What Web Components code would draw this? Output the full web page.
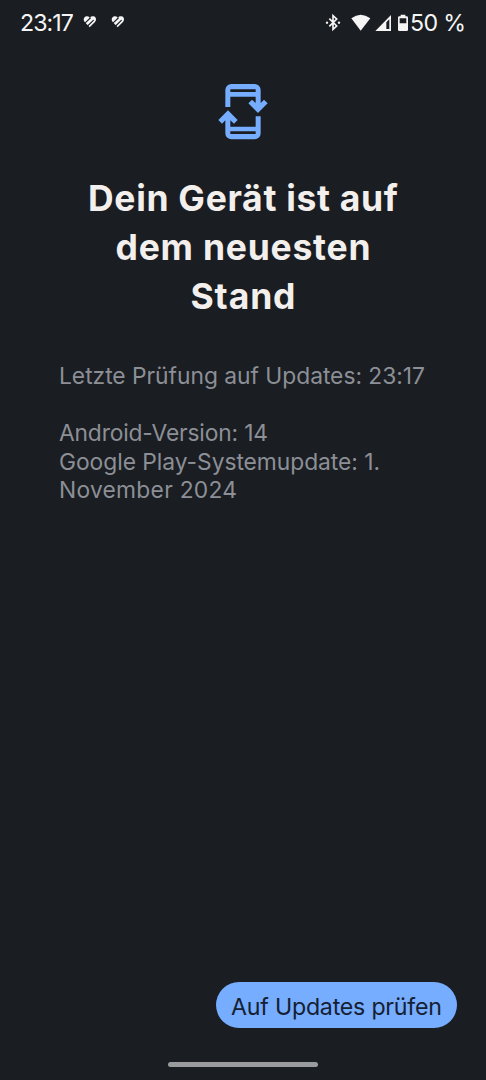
<!DOCTYPE html>
<html lang="de">
<head>
<meta charset="utf-8">
<title>Systemupdate</title>
<style>
html,body{margin:0;height:100%;background:#1a1d22;overflow:hidden}
body{font-family:Inter,"Open Sans",sans-serif}
</style>
</head>
<body>
<update-screen></update-screen>
<script>
const define = (name, html, setup) => customElements.define(name, class extends HTMLElement {
  connectedCallback() {
    if (this.shadowRoot) return;
    const t = document.createElement('template');
    t.innerHTML = html;
    this.attachShadow({mode: 'open'}).append(t.content.cloneNode(true));
    if (setup) setup(this);
  }
});

// A single line of text tracked to a given width.
define('tracked-text', `<style>:host{display:block;white-space:nowrap;width:max-content}span{display:inline-block}</style><span><slot></slot></span>`, el => {
  const s = el.shadowRoot.querySelector('span');
  const w = +el.getAttribute('width'), n = el.textContent.length;
  const gap = (w - s.getBoundingClientRect().width) / (n - 1);
  s.style.letterSpacing = gap + 'px';
  s.style.marginRight = -gap + 'px';
});

define('heart-icon', `<style>:host{display:block;width:14px;height:13px}svg{display:block}</style>
<svg width="14" height="13" viewBox="0 0 42 39"><path d="M20 37 5 21C-2 12 5 3 12 4Q17 4 20 8Q25 3 31 4C40 5 41 15 36 21Z" fill="#f5f5f5"/><path d="M5 25 22 9M14 33 31 16" fill="none" stroke="#1a1d22" stroke-width="3.4" stroke-linecap="round"/></svg>`);

define('status-bar', `<style>
:host{display:flex;height:46px;box-sizing:border-box;padding:0 20px 0 20px;align-items:center;color:#f5f5f5;font-size:23.2px;line-height:47px}
heart-icon{margin-left:9px;margin-top:-3px}heart-icon+heart-icon{margin-left:14px}
svg{display:block;margin-left:auto;margin-right:1px}
</style>
<tracked-text width="54">23:17</tracked-text><heart-icon></heart-icon><heart-icon></heart-icon>
<svg width="84" height="45" viewBox="45 0 252 135" fill="#f5f5f5">
<path d="M58 53 80 75 69 85V44L80 54 58 76" fill="none" stroke="#f5f5f5" stroke-width="5"/>
<circle cx="51" cy="65" r="3.5"/><circle cx="87" cy="65" r="3.5"/>
<path d="M124 52Q152 31 181 52L152 89Z"/>
<path fill-rule="evenodd" d="M196 90 243 42V90ZM229 64V84H238V55Z"/>
<path fill-rule="evenodd" d="M272 41H286V46H290Q294 46 294 50V86Q294 90 290 90H268Q264 90 264 86V50Q264 46 268 46H272ZM269 52V67H289V52Z"/>
</svg><tracked-text width="56">50 %</tracked-text>`);

define('update-icon', `<style>:host{display:block;width:70px;height:75px}svg{display:block}</style>
<svg width="70" height="75" viewBox="0 0 210 225" fill="#76adff"><defs><path id="h" fill-rule="evenodd" d="M52 96V45a18 18 0 0 1 18-18H140a18 18 0 0 1 18 18V84L168 74 179 85 150 114 121 85 132 74 143 84V65H67V96ZM67 43V51H143V43Z"/></defs><use href="#h"/><use href="#h" transform="rotate(180 105 110)"/></svg>`);

define('page-title', `<style>:host{display:flex;flex-direction:column;align-items:center;font-size:35.5px;font-weight:700;line-height:49px;color:#f2efec}</style><slot></slot>`);
define('update-details', `<style>:host{display:block;font-size:22.8px;line-height:28.7px;color:#8c8f96}</style><slot></slot>`);
define('pill-button', `<style>:host{display:block}button{display:flex;align-items:center;justify-content:center;width:241px;height:46px;padding:3px 0 0;box-sizing:border-box;border:0;border-radius:23px;background:#76adff;color:#152033;font:23.2px/46px Inter,"Open Sans",sans-serif}</style><button><slot></slot></button>`);
define('nav-handle', `<style>:host{display:block;width:150px;height:5px;border-radius:3px;background:#9a9b9d}</style>`);

define('update-screen', `<style>
:host{display:flex;flex-direction:column;width:486px;height:1080px;background:#1a1d22}
update-icon{margin:29px 0 0 208px}
page-title{margin-top:24px}
update-details{margin:40.5px 0 0 59px}
.gap{height:28.7px}
pill-button{margin:auto 29px 34px auto}
nav-handle{margin:0 auto 13px 168px}
</style>
<status-bar></status-bar>
<main>
<update-icon></update-icon>
<page-title><tracked-text width="310">Dein Gerät ist auf</tracked-text><tracked-text width="255">dem neuesten</tracked-text><tracked-text width="105">Stand</tracked-text></page-title>
<update-details><tracked-text width="366">Letzte Prüfung auf Updates: 23:17</tracked-text><div class="gap"></div><tracked-text width="209">Android-Version: 14</tracked-text><tracked-text width="321">Google Play-Systemupdate: 1.</tracked-text><tracked-text width="178">November 2024</tracked-text></update-details>
</main>
<pill-button><tracked-text width="211">Auf Updates prüfen</tracked-text></pill-button>
<nav-handle></nav-handle>`);
</script>
</body>
</html>
